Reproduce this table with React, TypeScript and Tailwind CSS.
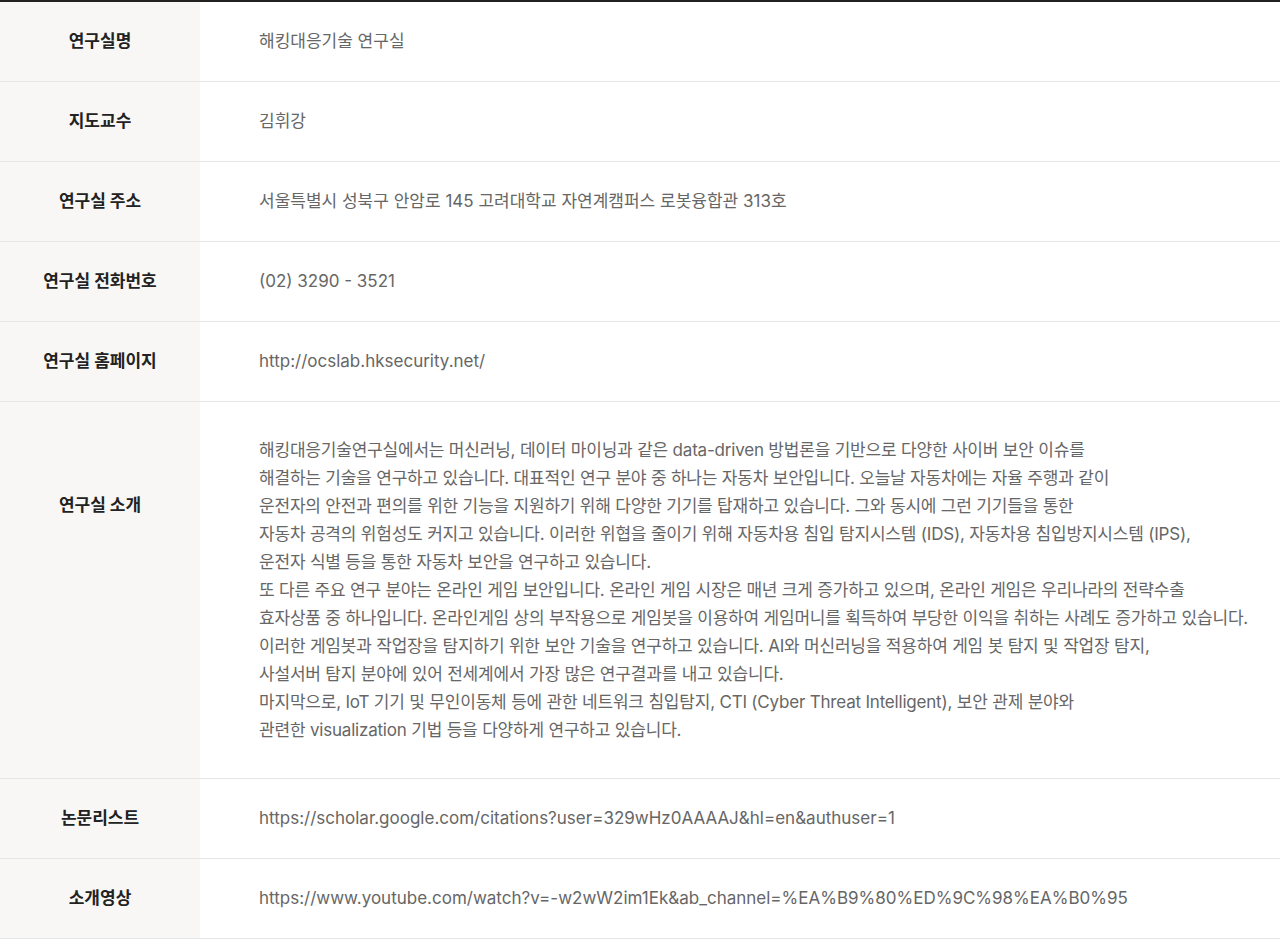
import React from "react";

const rows: { label: string; value: React.ReactNode }[] = [
  { label: "연구실명", value: "해킹대응기술 연구실" },
  { label: "지도교수", value: "김휘강" },
  { label: "연구실 주소", value: "서울특별시 성북구 안암로 145 고려대학교 자연계캠퍼스 로봇융합관 313호" },
  { label: "연구실 전화번호", value: "(02) 3290 - 3521" },
  { label: "연구실 홈페이지", value: "http://ocslab.hksecurity.net/" },
];

const intro = [
  "해킹대응기술연구실에서는 머신러닝, 데이터 마이닝과 같은 data-driven 방법론을 기반으로 다양한 사이버 보안 이슈를",
  "해결하는 기술을 연구하고 있습니다. 대표적인 연구 분야 중 하나는 자동차 보안입니다. 오늘날 자동차에는 자율 주행과 같이",
  "운전자의 안전과 편의를 위한 기능을 지원하기 위해 다양한 기기를 탑재하고 있습니다. 그와 동시에 그런 기기들을 통한",
  "자동차 공격의 위험성도 커지고 있습니다. 이러한 위협을 줄이기 위해 자동차용 침입 탐지시스템 (IDS), 자동차용 침입방지시스템 (IPS),",
  "운전자 식별 등을 통한 자동차 보안을 연구하고 있습니다.",
  "또 다른 주요 연구 분야는 온라인 게임 보안입니다. 온라인 게임 시장은 매년 크게 증가하고 있으며, 온라인 게임은 우리나라의 전략수출",
  "효자상품 중 하나입니다. 온라인게임 상의 부작용으로 게임봇을 이용하여 게임머니를 획득하여 부당한 이익을 취하는 사례도 증가하고 있습니다.",
  "이러한 게임봇과 작업장을 탐지하기 위한 보안 기술을 연구하고 있습니다. AI와 머신러닝을 적용하여 게임 봇 탐지 및 작업장 탐지,",
  "사설서버 탐지 분야에 있어 전세계에서 가장 많은 연구결과를 내고 있습니다.",
  "마지막으로, IoT 기기 및 무인이동체 등에 관한 네트워크 침입탐지, CTI (Cyber Threat Intelligent), 보안 관제 분야와",
  "관련한 visualization 기법 등을 다양하게 연구하고 있습니다.",
];

const after = [
  { label: "논문리스트", value: "https://scholar.google.com/citations?user=329wHz0AAAAJ&hl=en&authuser=1" },
  { label: "소개영상", value: "https://www.youtube.com/watch?v=-w2wW2im1Ek&ab_channel=%EA%B9%80%ED%9C%98%EA%B0%95" },
];

function Row({ label, children }: { label: string; children: React.ReactNode }) {
  return (
    <div className="flex border-b border-[#e6e6e6]">
      <div className="w-[200px] shrink-0 bg-[#f8f7f5] flex items-center justify-center text-[17px] font-bold text-[#222]">
        {label}
      </div>
      <div className="flex-1 min-h-[79px] flex items-center pl-[59px] text-[17px] text-[#666]">
        {children}
      </div>
    </div>
  );
}

export default function App() {
  return (
    <div
      className="w-[1280px] bg-white border-t-2 border-[#222]"
      style={{ fontFamily: 'Inter, "Noto Sans CJK KR", sans-serif' }}
    >
      {rows.map((r) => (
        <Row key={r.label} label={r.label}>
          <span className="whitespace-nowrap">{r.value}</span>
        </Row>
      ))}
      <div className="flex border-b border-[#e6e6e6]">
        <div className="w-[200px] shrink-0 bg-[#f8f7f5] flex justify-center pt-[89px] text-[17px] leading-[28px] font-bold text-[#222]">
          연구실 소개
        </div>
        <div className="flex-1 pl-[59px] py-[34px] text-[17px] leading-[28px] text-[#666] whitespace-nowrap tracking-[-0.2px]">
          {intro.map((l, i) => (
            <div key={i}>{l}</div>
          ))}
        </div>
      </div>
      {after.map((r) => (
        <Row key={r.label} label={r.label}>
          <span className="whitespace-nowrap">{r.value}</span>
        </Row>
      ))}
    </div>
  );
}
